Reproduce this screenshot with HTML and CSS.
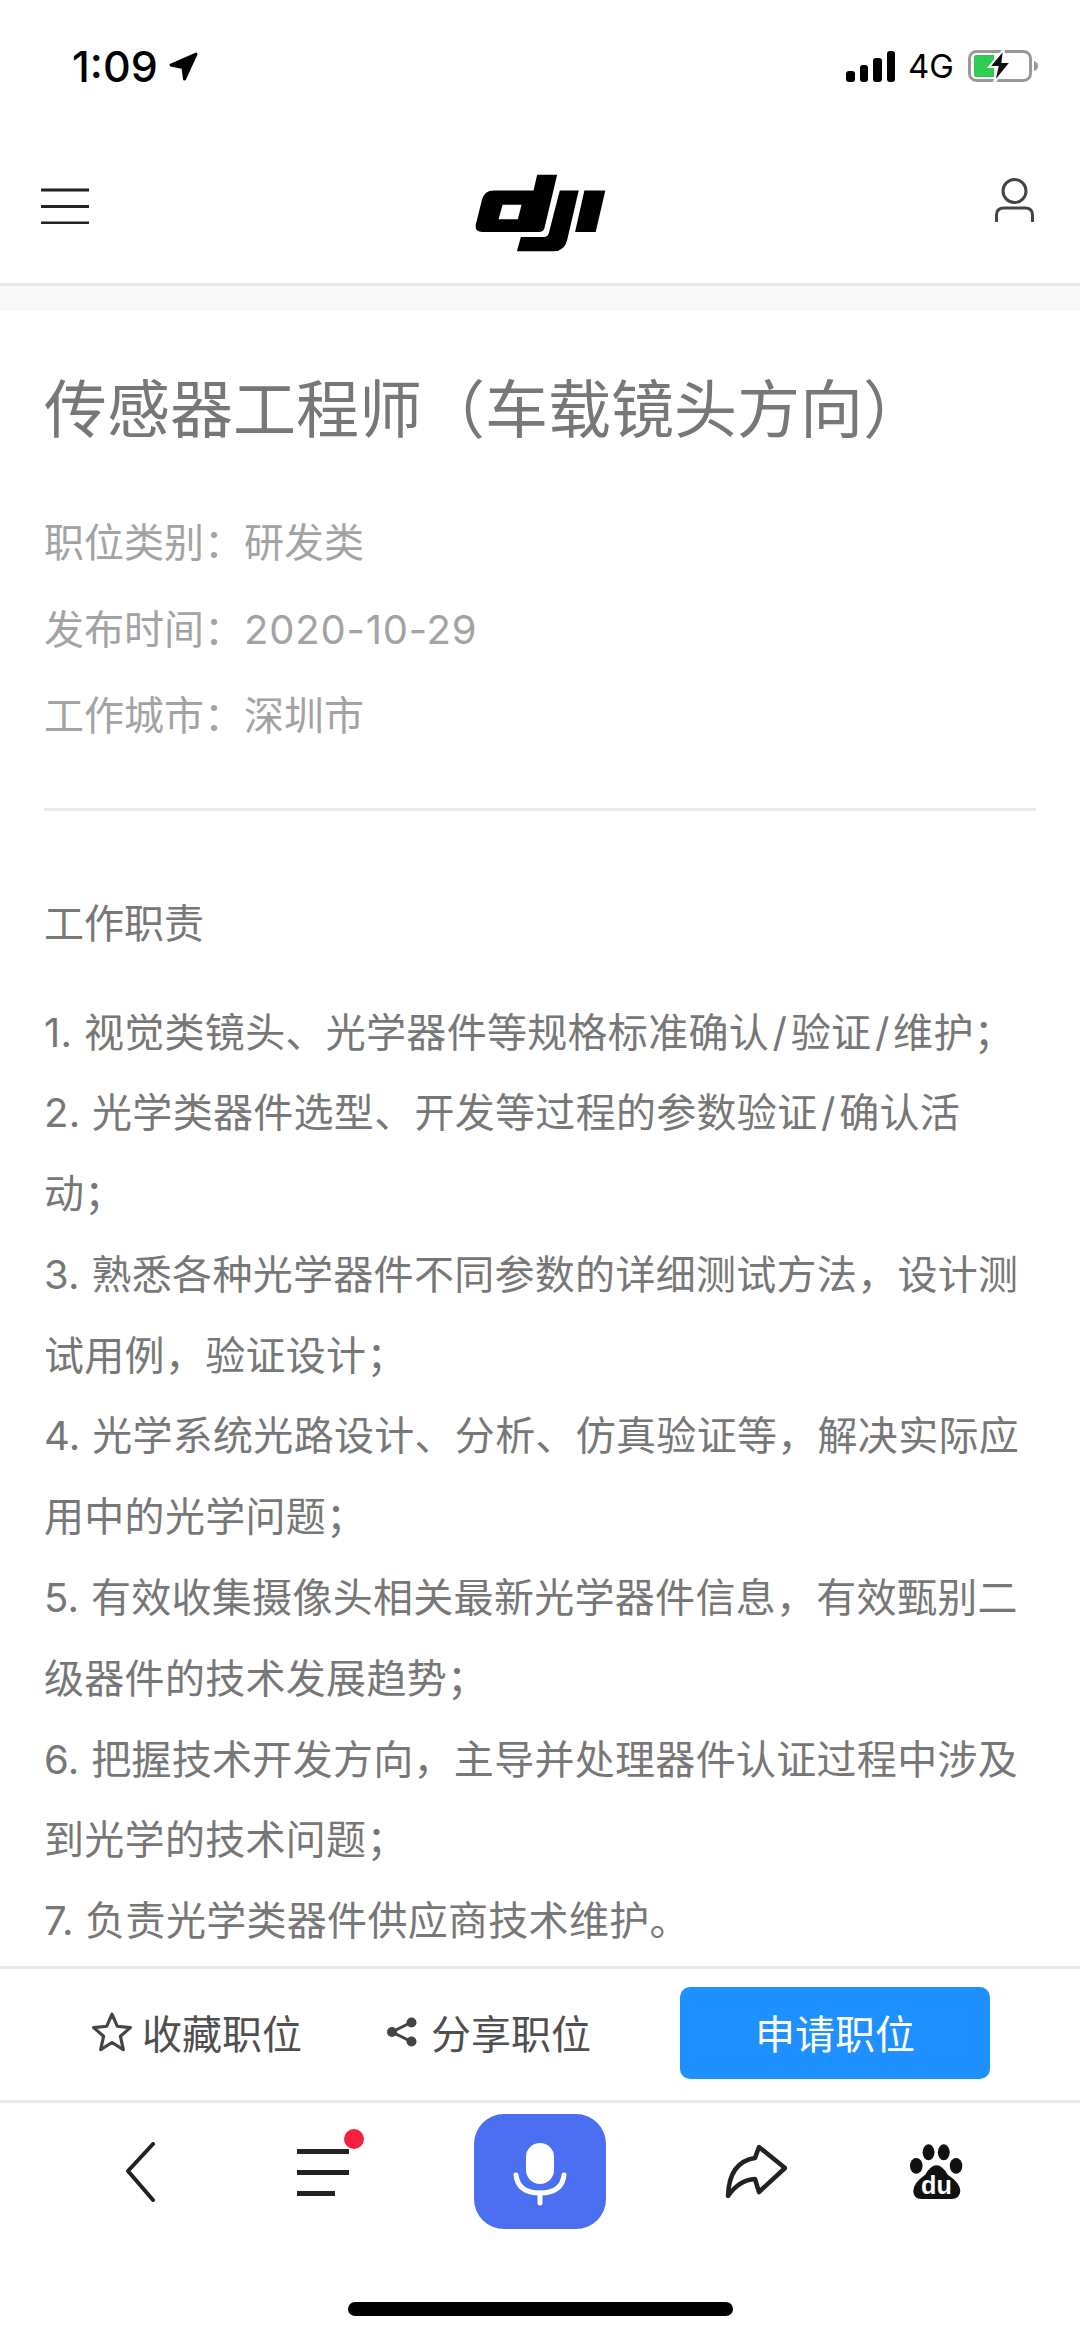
FILE: index.html
```html
<!DOCTYPE html>
<html lang="zh-CN">

<head>
    <meta charset="UTF-8">
    <meta name="viewport" content="width=device-width, initial-scale=1.0">
    <title>传感器工程师（车载镜头方向）</title>
    <link rel="stylesheet" href="styles.css">
</head>

<body>
    <div class="pagina">
        <div class="status">
            <div class="status_hora">
                <span>1:09</span>
                <svg class="status_flecha" viewBox="0 0 29 29"><path d="M27 2 L2 13 L14 15.5 L15.5 27 Z" /></svg>
            </div>
            <div class="status_derecha">
                <div class="senal"><i class="b1"></i><i class="b2"></i><i class="b3"></i><i class="b4"></i></div>
                <span class="red">4G</span>
                <svg class="bateria" viewBox="0 0 72 34">
                    <rect x="1.5" y="2.5" width="61" height="29" rx="7" fill="none" stroke="#999" stroke-width="3" />
                    <path d="M6 8 a2 2 0 0 1 2 -2 H26 V28 H8 a2 2 0 0 1 -2 -2 Z" fill="#2ecb55" />
                    <path d="M66 12 q4 1 4 5 q0 4 -4 5 Z" fill="#999" />
                    <path d="M36 0 L21 18 H29.5 L26 34 L43 13 H34.5 Z" fill="#111" stroke="#fff" stroke-width="2" />
                </svg>
            </div>
        </div>

        <header class="cabecera">
            <svg class="hamburguesa" viewBox="0 0 48 36">
                <path d="M0 2 H48 M0 18.5 H48 M0 35 H48" stroke="#222" stroke-width="3" />
            </svg>
            <svg class="logo" viewBox="100 70 400 240">
                <path d="M290 75 H350 L312 235 Q309 247 295 247 H125 Q100 247 106 222 L124 150 Q131 122 160 122 H279 Z M186 165 L174 209 H232 L243 165 Z" fill-rule="evenodd" />
                <path d="M358 122 H415 L380 272 Q372 305 340 305 H229 L241 262 H310 Q322 262 325 250 Z" />
                <path d="M432 122 H495 L466 247 H404 Z" />
            </svg>
            <svg class="usuario" viewBox="0 0 39 45">
                <circle cx="19.5" cy="13" r="11.5" fill="none" stroke="#444" stroke-width="3" />
                <path d="M1.5 44 V37 Q1.5 30 9 30 H30 Q37.5 30 37.5 37 V44" fill="none" stroke="#444" stroke-width="3" />
            </svg>
        </header>
        <div class="banda"></div>

        <main class="contenido">
            <h1 class="titulo">传感器工程师（车载镜头方向）</h1>
            <p class="dato">职位类别：研发类</p>
            <p class="dato">发布时间：<span class="fecha">2020-10-29</span></p>
            <p class="dato">工作城市：深圳市</p>
            <hr class="linea">
            <h2 class="seccion">工作职责</h2>
            <div class="texto">
                <p>1. 视觉类镜头、光学器件等规格标准确认<span class="sl">/</span>验证<span class="sl">/</span>维护；</p>
                <p>2. 光学类器件选型、开发等过程的参数验证<span class="sl">/</span>确认活<br>动；</p>
                <p>3. 熟悉各种光学器件不同参数的详细测试方法，设计测试用例，验证设计；</p>
                <p>4. 光学系统光路设计、分析、仿真验证等，解决实际应用中的光学问题；</p>
                <p>5. 有效收集摄像头相关最新光学器件信息，有效甄别二级器件的技术发展趋势；</p>
                <p>6. 把握技术开发方向，主导并处理器件认证过程中涉及到光学的技术问题；</p>
                <p>7. 负责光学类器件供应商技术维护。</p>
            </div>
        </main>

        <div class="acciones">
            <div class="accion">
                <svg class="estrella" viewBox="0 0 40 40">
                    <path d="M20 3 L25 14.5 L37.5 15.8 L28 24 L30.8 36.8 L20 30 L9.2 36.8 L12 24 L2.5 15.8 L15 14.5 Z" fill="none" stroke="#444" stroke-width="3" stroke-linejoin="round" />
                </svg>
                <span>收藏职位</span>
            </div>
            <div class="accion accion_compartir">
                <svg class="compartir" viewBox="0 0 32 30">
                    <path d="M26 5 L6 15 L26 25" fill="none" stroke="#444" stroke-width="3" />
                    <circle cx="25.5" cy="5.5" r="5" fill="#444" />
                    <circle cx="6" cy="15" r="5" fill="#444" />
                    <circle cx="25.5" cy="24.5" r="5" fill="#444" />
                </svg>
                <span>分享职位</span>
            </div>
            <div class="boton">申请职位</div>
        </div>

        <nav class="barra">
            <svg class="atras" viewBox="0 0 30 60">
                <path d="M28 2 L3 29 L28 58" fill="none" stroke="#222" stroke-width="4" stroke-linecap="round" stroke-linejoin="round" />
            </svg>
            <div class="menu">
                <i class="m1"></i><i class="m2"></i><i class="m3"></i>
                <span class="punto"></span>
            </div>
            <div class="micro">
                <svg viewBox="0 0 132 115">
                    <rect x="52" y="29" width="28" height="41" rx="14" fill="#fff" />
                    <path d="M42 61 Q44 79 66 79 Q88 79 90 61" fill="none" stroke="#fff" stroke-width="5" stroke-linecap="round" />
                    <path d="M66 79 V89" stroke="#fff" stroke-width="5" stroke-linecap="round" />
                </svg>
            </div>
            <svg class="reenviar" viewBox="0 0 62 54">
                <path d="M34 3 L60 24 L34 48 L30 35 Q14 36 3 52 Q4 18 30 14 Z" fill="none" stroke="#222" stroke-width="4.5" stroke-linejoin="round" />
            </svg>
            <svg class="huella" viewBox="78 160 172 170">
                <ellipse cx="146" cy="187" rx="18" ry="24" />
                <ellipse cx="192" cy="187" rx="18" ry="24" />
                <ellipse cx="109" cy="228" rx="19" ry="24" />
                <ellipse cx="229" cy="228" rx="19" ry="24" />
                <path d="M170 226 Q188 226 204 255 Q242 280 242 304 Q240 328 215 328 H125 Q100 328 100 304 Q100 280 136 255 Q152 226 170 226 Z" />
                <text class="huella_texto" x="170" y="312" text-anchor="middle">du</text>
            </svg>
        </nav>
        <div class="inicio"></div>
    </div>
</body>

</html>
```

FILE: styles.css
```css
* {
    padding: 0;
    margin: 0;
    box-sizing: border-box;
}

body {
    background: #fff;
    font-family: "Inter", "Noto Sans CJK SC", sans-serif;
}

.pagina {
    width: 1080px;
    height: 2339px;
    display: flex;
    flex-direction: column;
    overflow: hidden;
}

/* barra de estado */
.status {
    height: 134px;
    display: flex;
    justify-content: space-between;
    align-items: flex-start;
    padding: 44px 40px 0 72px;
    color: #000;
}

.status_hora {
    display: flex;
    align-items: center;
    gap: 11px;
    font-size: 43px;
    font-weight: 500;
    line-height: 44px;
}

.status_flecha {
    width: 29px;
    height: 29px;
    fill: #000;
    stroke: #000;
    stroke-width: 3;
    stroke-linejoin: round;
}

.status_derecha {
    display: flex;
    align-items: center;
    height: 44px;
}

.senal {
    display: flex;
    align-items: flex-end;
    gap: 5px;
    height: 31px;
}

.senal i {
    width: 8.5px;
    background: #000;
    border-radius: 3px;
}

.b1 { height: 11px; }
.b2 { height: 17px; }
.b3 { height: 24px; }
.b4 { height: 31px; }

.red {
    font-size: 33px;
    font-weight: 400;
    margin-left: 13px;
    width: 60px;
}

.bateria {
    width: 72px;
    height: 34px;
}

/* cabecera */
.cabecera {
    height: 149px;
    display: flex;
    justify-content: space-between;
    align-items: flex-start;
    padding: 0 46px 0 41px;
}

.hamburguesa {
    width: 48px;
    height: 36px;
    margin-top: 54px;
}

.logo {
    width: 133px;
    height: 80px;
    margin-top: 39px;
    margin-right: 4px;
}

.usuario {
    width: 39px;
    height: 45px;
    margin-top: 44px;
}

.banda {
    height: 28px;
    background: #f8f8f8;
    border-top: 3px solid #e8e8e8;
}

/* contenido */
.contenido {
    flex: 1;
    overflow: hidden;
    padding: 53px 44px 0 44px;
    color: #777;
    font-weight: 400;
}

.titulo {
    font-size: 63px;
    font-weight: 400;
    line-height: 90px;
    color: #777;
    margin-bottom: 46px;
}

.dato {
    font-size: 40px;
    line-height: 86.5px;
    color: #a3a3a3;
}

.fecha {
    letter-spacing: 0.8px;
}

.linea {
    border: 0;
    border-top: 3px solid #eaeaea;
    margin-top: 48px;
}

.seccion {
    font-size: 40px;
    font-weight: 400;
    line-height: 81px;
    margin-top: 72px;
    margin-bottom: 29px;
}

.texto {
    font-size: 40px;
    line-height: 80.8px;
    letter-spacing: 0.3px;
    color: #777;
}

.sl {
    padding: 0 3.5px;
}

/* barra de acciones */
.acciones {
    height: 137px;
    flex-shrink: 0;
    border-top: 3px solid #e8e8e8;
    border-bottom: 3px solid #e8e8e8;
    display: flex;
    align-items: center;
    padding: 0 90px 3px 91px;
    font-size: 40px;
    font-weight: 400;
    color: #4f4f4f;
}

.accion {
    display: flex;
    align-items: center;
    gap: 9px;
    margin-bottom: 2px;
}

.accion_compartir {
    margin-left: 84px;
    gap: 13px;
}

.estrella {
    width: 42px;
    height: 42px;
}

.compartir {
    width: 32px;
    height: 30px;
}

.boton {
    width: 310px;
    height: 92px;
    line-height: 95px;
    margin-left: auto;
    text-align: center;
    background: #1e90ff;
    border-radius: 10px;
    color: #fff;
}

/* barra del navegador */
.barra {
    height: 126px;
    flex-shrink: 0;
    display: flex;
    align-items: flex-start;
    padding: 11px 0 0 125px;
}

.atras {
    width: 30px;
    height: 60px;
    margin-top: 28px;
}

.menu {
    width: 52px;
    margin-left: 142px;
    margin-top: 35px;
    position: relative;
    display: flex;
    flex-direction: column;
    gap: 16px;
}

.menu i {
    height: 5px;
    background: #222;
}

.menu .m3 {
    width: 38px;
}

.punto {
    position: absolute;
    top: -20px;
    left: 47px;
    width: 20px;
    height: 20px;
    border-radius: 50%;
    background: #f5203f;
}

.micro {
    width: 132px;
    height: 115px;
    margin-left: 125px;
    background: #4c6ef0;
    border-radius: 30px;
}

.micro svg {
    display: block;
    width: 132px;
    height: 115px;
}

.reenviar {
    width: 62px;
    height: 54px;
    margin-left: 119px;
    margin-top: 30px;
}

.huella {
    width: 57px;
    height: 57px;
    margin-left: 119px;
    margin-top: 29px;
    fill: #111;
}

.huella_texto {
    font-family: "Liberation Sans", sans-serif;
    font-size: 76px;
    font-weight: 700;
    fill: #fff;
}

.inicio {
    width: 385px;
    height: 14px;
    flex-shrink: 0;
    margin: 73px auto 23px;
    background: #000;
    border-radius: 7px;
}
```
